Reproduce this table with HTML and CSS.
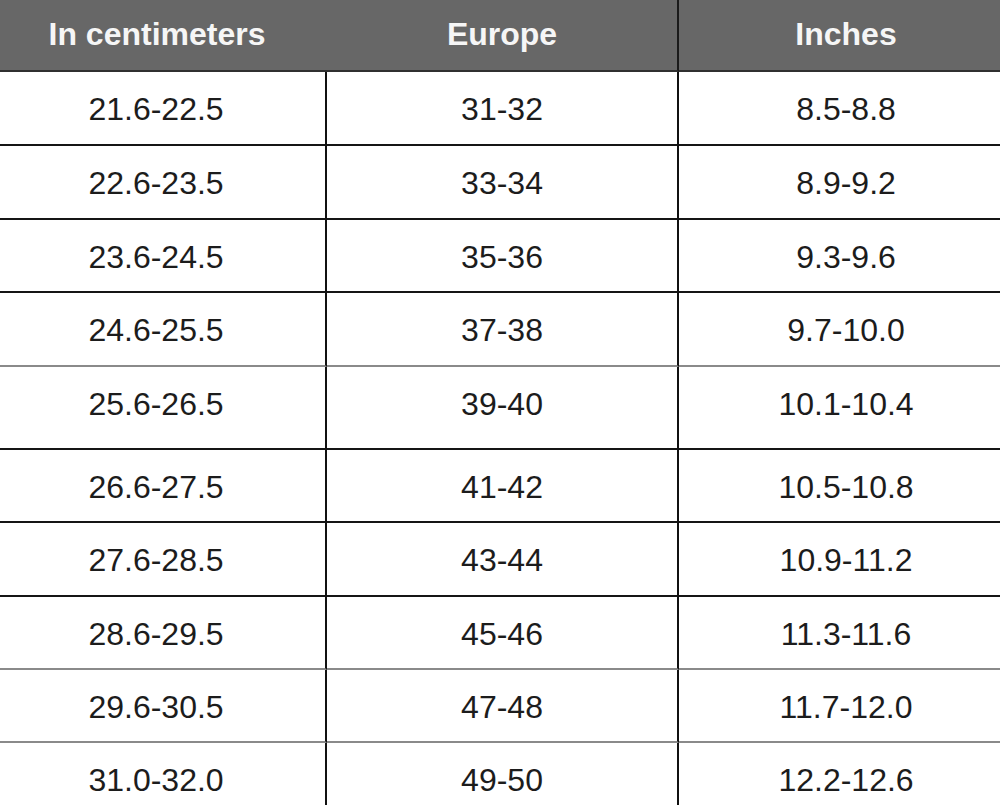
FILE: index.html
```html
<!DOCTYPE html>
<html>
<head>
<meta charset="utf-8">
<link rel="stylesheet" href="styles.css">
</head>
<body>
<div class="sheet">
  <div class="size-table">
    <div class="cell head c1">In centimeters</div>
    <div class="cell head c2">Europe</div>
    <div class="cell head c3">Inches</div>

    <div class="cell r h74 dark c1">21.6-22.5</div>
    <div class="cell r h74 dark c2">31-32</div>
    <div class="cell r h74 dark c3">8.5-8.8</div>

    <div class="cell r h74 dark c1">22.6-23.5</div>
    <div class="cell r h74 dark c2">33-34</div>
    <div class="cell r h74 dark c3">8.9-9.2</div>

    <div class="cell r h73 dark c1">23.6-24.5</div>
    <div class="cell r h73 dark c2">35-36</div>
    <div class="cell r h73 dark c3">9.3-9.6</div>

    <div class="cell r h74 gray c1">24.6-25.5</div>
    <div class="cell r h74 gray c2">37-38</div>
    <div class="cell r h74 gray c3">9.7-10.0</div>

    <div class="cell r h83 dark c1">25.6-26.5</div>
    <div class="cell r h83 dark c2">39-40</div>
    <div class="cell r h83 dark c3">10.1-10.4</div>

    <div class="cell r h73 dark c1">26.6-27.5</div>
    <div class="cell r h73 dark c2">41-42</div>
    <div class="cell r h73 dark c3">10.5-10.8</div>

    <div class="cell r h74 dark c1">27.6-28.5</div>
    <div class="cell r h74 dark c2">43-44</div>
    <div class="cell r h74 dark c3">10.9-11.2</div>

    <div class="cell r h73 gray c1">28.6-29.5</div>
    <div class="cell r h73 gray c2">45-46</div>
    <div class="cell r h73 gray c3">11.3-11.6</div>

    <div class="cell r h73 gray c1">29.6-30.5</div>
    <div class="cell r h73 gray c2">47-48</div>
    <div class="cell r h73 gray c3">11.7-12.0</div>

    <div class="cell r h74 c1">31.0-32.0</div>
    <div class="cell r h74 c2">49-50</div>
    <div class="cell r h74 c3">12.2-12.6</div>
  </div>
</div>
</body>
</html>
```

FILE: styles.css
```css
html, body {
  margin: 0;
  padding: 0;
  background: #ffffff;
  overflow: hidden;
}

.sheet {
  width: 1000px;
  height: 805px;
  overflow: hidden;
}

.size-table {
  display: grid;
  grid-template-columns: 340px 352px 334px;
  margin-left: -13px;
  width: 1026px;
  font-family: "Liberation Sans", Arial, sans-serif;
  font-size: 32px;
  line-height: 36px;
}

.cell {
  box-sizing: border-box;
  text-align: center;
  color: #1c1c1c;
}

.head {
  height: 72px;
  padding-top: 16px;
  background: #676767;
  color: #f6f6f6;
  font-weight: bold;
  border-bottom: 2px solid #303030;
}

.head.c2 {
  border-right: 2px solid #1a1a1a;
}

.r {
  padding-top: 19px;
  background: #ffffff;
}

.r.c1, .r.c2 {
  border-right: 2px solid #111111;
}

.h73 { height: 73px; }
.h74 { height: 74px; }
.h83 { height: 83px; }

.dark { border-bottom: 2px solid #151515; }
.gray { border-bottom: 2px solid #8a8a8a; }
```
